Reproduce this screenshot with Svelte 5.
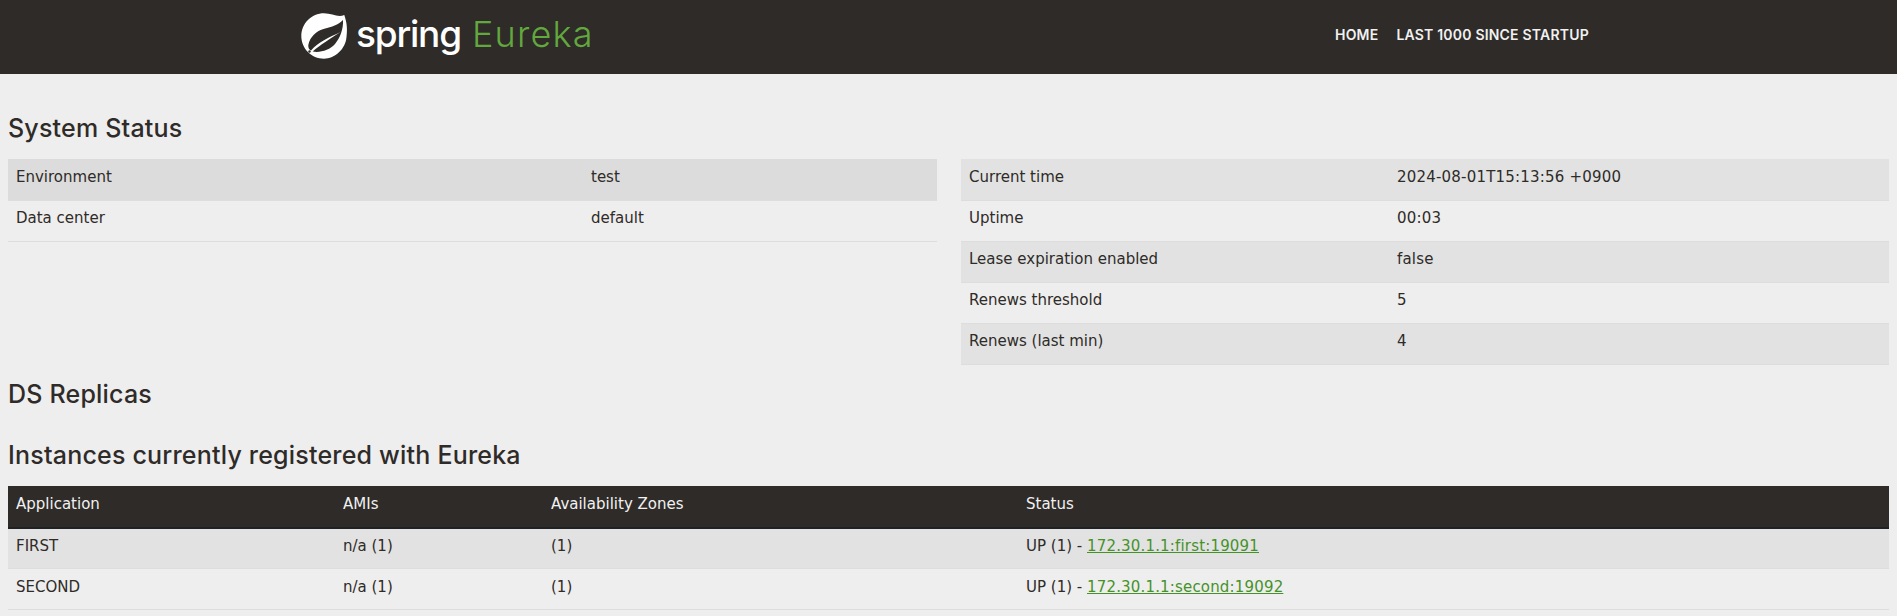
<script>
  const general = [
    ['Environment', 'test'],
    ['Data center', 'default']
  ];
  const status = [
    ['Current time', '2024-08-01T15:13:56 +0900'],
    ['Uptime', '00:03'],
    ['Lease expiration enabled', 'false'],
    ['Renews threshold', '5'],
    ['Renews (last min)', '4']
  ];
  const instances = [
    { app: 'FIRST', link: '172.30.1.1:first:19091' },
    { app: 'SECOND', link: '172.30.1.1:second:19092' }
  ];
</script>

<nav class="navbar">
  <a class="brand" href="/">
    <svg class="leaf" viewBox="0 0 48 48" width="48" height="48">
      <path fill="#fff" fill-rule="evenodd" d="M24 1.300C32 1.300 38 6 44.300 3C47 11 47.500 17 46.500 25C45.500 37 35 46.700 24 46.700C11.500 46.700 1.300 36.500 1.300 24C1.300 11.500 11.500 1.300 24 1.300ZM43 8C38 13 32 15 24.300 16.800C16 19 10 25 8.300 33C8 36 9.500 38 11 38.500C18 30 30 25 40.500 20C30 27 20 33 12.700 39.500C20 41 30 38 35 32C40 26 43.500 17 43 8Z"/>
      <circle cx="9.500" cy="39.500" r="1.200" fill="#2e2b28"/>
    </svg>
    <span class="spring">spring</span>
    <span class="eureka">Eureka</span>
  </a>
  <ul class="links">
    <li><a href="/">Home</a></li>
    <li><a href="/lastn">Last 1000 since startup</a></li>
  </ul>
</nav>

<main>
  <h1 class="first">System Status</h1>
  <div class="row">
    <table class="left">
      <tbody>
        {#each general as [label, value]}
          <tr><td class="label">{label}</td><td>{value}</td></tr>
        {/each}
      </tbody>
    </table>
    <table class="right">
      <tbody>
        {#each status as [label, value]}
          <tr><td class="label">{label}</td><td>{value}</td></tr>
        {/each}
      </tbody>
    </table>
  </div>

  <h1 class="replicas">DS Replicas</h1>

  <h1 class="instances">Instances currently registered with Eureka</h1>
  <table class="list">
    <thead>
      <tr>
        <th class="c1">Application</th>
        <th class="c2">AMIs</th>
        <th class="c3">Availability Zones</th>
        <th>Status</th>
      </tr>
    </thead>
    <tbody>
      {#each instances as item}
        <tr>
          <td>{item.app}</td>
          <td>n/a (1)</td>
          <td>(1)</td>
          <td>UP (1) - <a href="/">{item.link}</a></td>
        </tr>
      {/each}
    </tbody>
  </table>
</main>

<style>
  :global(body) {
    margin: 0;
    background: #eeeeee;
    color: #2e2b28;
    font-family: "DejaVu Sans", sans-serif;
    font-size: 15px;
  }

  .navbar {
    height: 74px;
    background: #2e2b28;
    display: flex;
    align-items: center;
    padding-left: 300px;
  }

  .brand {
    display: flex;
    align-items: center;
    text-decoration: none;
    width: 1035px;
  }

  .leaf {
    margin-top: -3px;
    margin-right: 8px;
  }

  .spring {
    color: #fff;
    font-family: Inter, sans-serif;
    font-size: 37px;
    font-weight: 500;
    letter-spacing: -1.2px;
    margin-top: -7px;
    margin-right: 11px;
  }

  .eureka {
    color: #62a83e;
    font-family: Inter, sans-serif;
    font-weight: 300;
    font-size: 36px;
    letter-spacing: 1.2px;
    margin-top: -7px;
  }

  .links {
    list-style: none;
    display: flex;
    gap: 18px;
    margin: 0;
    padding: 0 0 4px;
  }

  .links a {
    color: #f1f1f1;
    font-family: Inter, sans-serif;
    font-size: 14px;
    font-weight: 600;
    letter-spacing: 0.2px;
    text-decoration: none;
    text-transform: uppercase;
  }

  main {
    padding: 0 8px;
  }

  h1 {
    font-family: Inter, sans-serif;
    font-size: 25px;
    font-weight: 500;
    letter-spacing: 0.2px;
    line-height: 30px;
    margin: 0;
  }

  .first {
    padding-top: 39px;
    padding-bottom: 16px;
  }

  .replicas {
    padding-top: 14px;
  }

  .instances {
    padding-top: 31px;
    padding-bottom: 16px;
  }

  .row {
    display: flex;
    justify-content: space-between;
    align-items: flex-start;
  }

  table {
    border-collapse: collapse;
    table-layout: fixed;
  }

  .left {
    width: 929px;
  }

  .left tbody tr:first-child {
    background: #dcdcdc;
  }

  .right {
    width: 928px;
  }

  .right tr:nth-child(odd) {
    background: #e2e2e2;
  }

  .right td:last-child {
    letter-spacing: 0.2px;
  }

  .left .label {
    width: 575px;
  }

  .right .label {
    width: 428px;
  }

  td, th {
    padding: 0 8px 5px;
    text-align: left;
    box-sizing: border-box;
  }

  td {
    height: 41px;
    border-bottom: 1px solid #dddddd;
  }

  th {
    height: 42px;
  }

  .list {
    width: 100%;
  }

  .list th {
    background: #2e2b28;
    color: #f1f1f1;
    font-weight: 400;
    border-bottom: 2px solid #1f2224;
  }

  .list tbody tr:nth-child(odd) {
    background: #e2e2e2;
  }

  .c1 {
    width: 327px;
  }

  .c2 {
    width: 208px;
  }

  .c3 {
    width: 475px;
  }

  .list a {
    color: #46922a;
    letter-spacing: 0.17px;
  }
</style>
